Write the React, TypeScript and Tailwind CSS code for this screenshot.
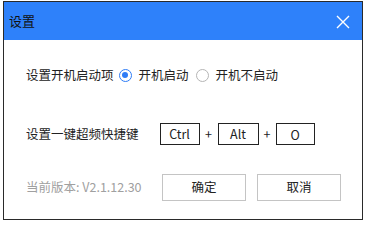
export default function App() {
  const font = { fontFamily: '"Noto Sans CJK SC", "Noto Sans", sans-serif' };

  return (
    <div className="w-[382px] h-[225px] bg-white" style={font}>
      <div className="ml-[3px] mt-[1px] w-[360px] h-[219px] border border-[#2a2a2a] flex flex-col">
        {/* Title bar */}
        <div className="h-[38px] bg-[#2e81fa] flex items-center justify-between pl-[5px] pr-[12px]">
          <span className="text-[13px] text-[#111]">设置</span>
          <svg width="14" height="14" viewBox="0 0 14 14" className="mt-[2px]">
            <path d="M1 1L13 13M13 1L1 13" stroke="#ffffff" strokeWidth="1.4" />
          </svg>
        </div>

        <div className="flex flex-col pl-[22px] text-[12.5px] text-[#222]">
          {/* Startup option */}
          <div className="h-[20px] mt-[25px] flex items-center">
            <span>设置开机启动项</span>
            <span className="ml-[5px] w-[13px] h-[13px] rounded-full border-[1.5px] border-[#2e7cf6] flex items-center justify-center">
              <span className="w-[6px] h-[6px] rounded-full bg-[#2e7cf6]" />
            </span>
            <span className="ml-[7px]">开机启动</span>
            <span className="ml-[7px] w-[13px] h-[13px] rounded-full border border-[#b5b5b5]" />
            <span className="ml-[7px]">开机不启动</span>
          </div>

          {/* Hotkey */}
          <div className="h-[22px] mt-[38px] flex items-center">
            <span>设置一键超频快捷键</span>
            <span className="ml-[21px] w-[40px] h-[22px] border border-[#222] flex items-center justify-center">Ctrl</span>
            <span className="w-[18px] text-center">+</span>
            <span className="w-[41px] h-[22px] border border-[#222] flex items-center justify-center">Alt</span>
            <span className="w-[17px] text-center">+</span>
            <span className="w-[39px] h-[22px] border border-[#222] flex items-center justify-center pt-[3px]">O</span>
          </div>

          {/* Footer */}
          <div className="h-[27px] mt-[29px] flex items-center">
            <span className="w-[136px] text-[#a0a0a0]">当前版本: V2.1.12.30</span>
            <button className="w-[84px] h-[27px] border border-[#c4c4c4] bg-white text-[12.5px] text-[#222]">确定</button>
            <button className="ml-[11px] w-[84px] h-[27px] border border-[#c4c4c4] bg-white text-[12.5px] text-[#222]">取消</button>
          </div>
        </div>
      </div>
    </div>
  );
}
